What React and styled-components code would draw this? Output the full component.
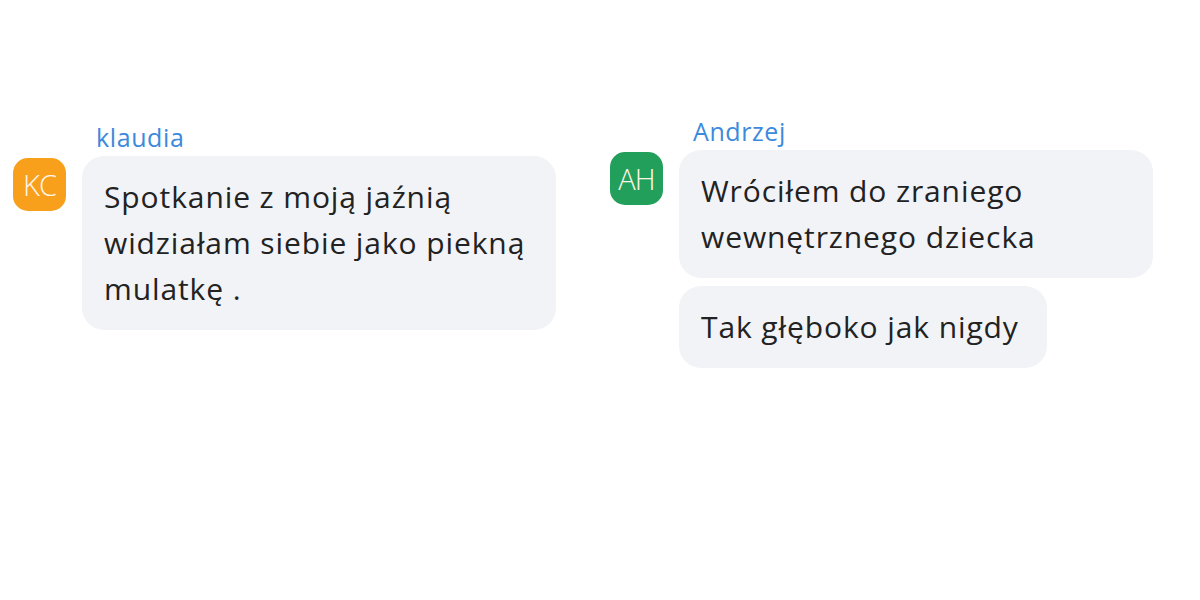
import styled, { createGlobalStyle } from "styled-components";

const GlobalStyle = createGlobalStyle`
    html, body {
        margin: 0;
        padding: 0;
        background: #ffffff;
        font-family: "Open Sans", "Noto Sans", "Liberation Sans", sans-serif;
    }
`;

const messages = [
    {
        name: "klaudia",
        initials: "KC",
        color: "#f8a01c",
        top: 118,
        bubbles: [
            "Spotkanie z moją jaźnią widziałam siebie jako piekną mulatkę .",
        ],
    },
    {
        name: "Andrzej",
        initials: "AH",
        color: "#22a05b",
        top: 112,
        bubbles: [
            "Wróciłem do zraniego wewnętrznego dziecka",
            "Tak głęboko jak nigdy",
        ],
    },
];

const App = () => {
    return (
        <>
            <GlobalStyle />
            <Page>
                {messages.map((m) => (
                    <Group key={m.name} $top={m.top}>
                        <Name>{m.name}</Name>
                        <Row>
                            <Avatar $color={m.color}>{m.initials}</Avatar>
                            <Bubbles>
                                {m.bubbles.map((b) => (
                                    <Bubble key={b}>{b}</Bubble>
                                ))}
                            </Bubbles>
                        </Row>
                    </Group>
                ))}
            </Page>
        </>
    );
};

export default App;

const Page = styled.div`
    width: 1200px;
    height: 600px;
    box-sizing: border-box;
    padding-left: 13px;
    display: grid;
    grid-template-columns: 597px 1fr;
    align-items: start;
`;

const Group = styled.div`
    margin-top: ${(p) => p.$top}px;
    display: flex;
    flex-direction: column;
`;

const Name = styled.div`
    margin-left: 83px;
    height: 38px;
    font-size: 25px;
    line-height: 38px;
    letter-spacing: 0.6px;
    color: #3d89dc;
`;

const Row = styled.div`
    display: flex;
    align-items: flex-start;
    gap: 16px;
`;

const Avatar = styled.div`
    flex: none;
    width: 53px;
    height: 53px;
    margin-top: 2px;
    border-radius: 15px;
    background: ${(p) => p.$color};
    color: #fdf6e8;
    font-size: 29px;
    font-weight: 300;
    display: flex;
    align-items: center;
    justify-content: center;
    letter-spacing: -1px;
`;

const Bubbles = styled.div`
    display: flex;
    flex-direction: column;
    align-items: flex-start;
    gap: 8px;
`;

const Bubble = styled.div`
    max-width: 474px;
    box-sizing: border-box;
    padding: 18px 28px 18px 22px;
    border-radius: 22px;
    background: #f2f3f7;
    color: #222222;
    font-size: 30px;
    line-height: 46px;
    letter-spacing: 0.9px;
`;
